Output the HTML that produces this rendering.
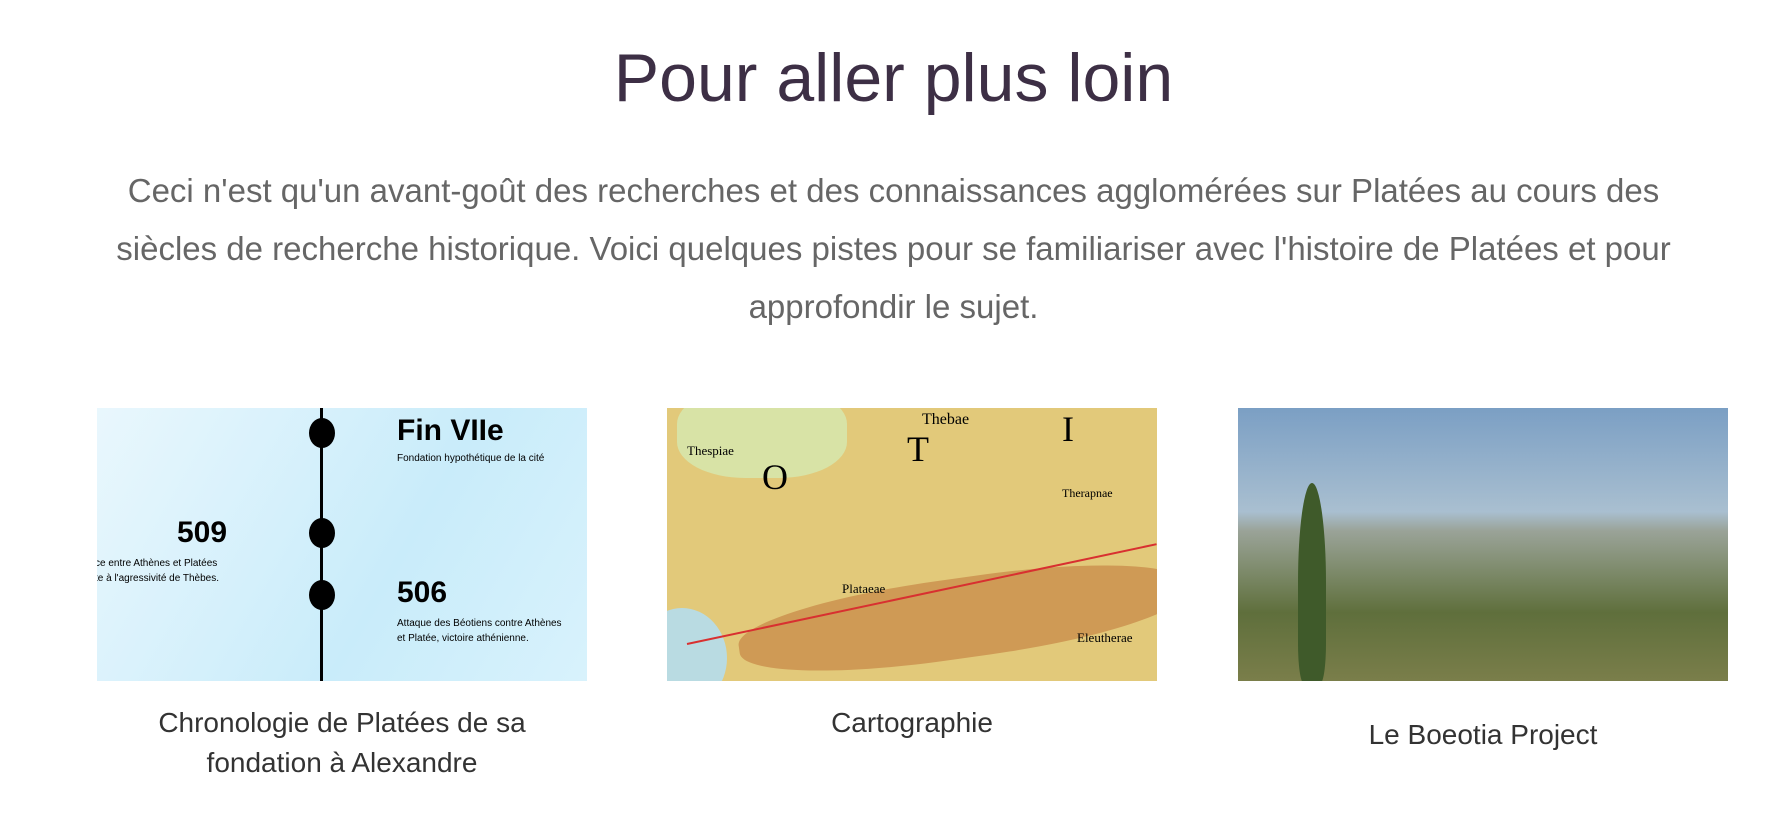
<!DOCTYPE html>
<html><head><meta charset="utf-8"><style>
body{margin:0;width:1787px;height:816px;background:#fff;overflow:hidden;font-family:"Liberation Sans",sans-serif;}
h1{position:absolute;top:39px;left:0;width:1787px;text-align:center;margin:0;font-weight:300;font-size:68px;color:#3d2f45;}
p.intro{position:absolute;top:162px;left:0;width:1787px;text-align:center;margin:0;font-weight:300;font-size:33px;line-height:58px;color:#666;white-space:nowrap;}
.card{position:absolute;top:408px;width:490px;height:273px;overflow:hidden;}
.cap{position:absolute;width:490px;text-align:center;font-size:28px;line-height:40px;color:#333;}
</style></head><body>
<h1>Pour aller plus loin</h1>
<p class="intro">Ceci n'est qu'un avant-goût des recherches et des connaissances agglomérées sur Platées au cours des<br>siècles de recherche historique. Voici quelques pistes pour se familiariser avec l'histoire de Platées et pour<br>approfondir le sujet.</p>

<div class="card" style="left:97px;background:linear-gradient(120deg,#e9f7fd,#c9ecfa 60%,#d8f2fc);">
<div style="position:absolute;left:223px;top:0;width:3px;height:273px;background:#000"></div>
<div style="position:absolute;left:212px;top:10px;width:26px;height:30px;border-radius:50%;background:#000"></div>
<div style="position:absolute;left:212px;top:110px;width:26px;height:30px;border-radius:50%;background:#000"></div>
<div style="position:absolute;left:212px;top:172px;width:26px;height:30px;border-radius:50%;background:#000"></div>
<div style="position:absolute;left:300px;top:6px;font-size:30px;font-weight:bold;color:#000">Fin VIIe</div>
<div style="position:absolute;left:300px;top:45px;font-size:10px;color:#000;white-space:nowrap">Fondation hypothétique de la cité</div>
<div style="position:absolute;left:80px;top:108px;font-size:30px;font-weight:bold;color:#000">509</div>
<div style="position:absolute;left:-2px;top:148px;font-size:10px;line-height:15px;color:#000;white-space:nowrap">ce entre Athènes et Platées<br>te à l'agressivité de Thèbes.</div>
<div style="position:absolute;left:300px;top:168px;font-size:30px;font-weight:bold;color:#000">506</div>
<div style="position:absolute;left:300px;top:208px;font-size:10px;line-height:15px;color:#000;white-space:nowrap">Attaque des Béotiens contre Athènes<br>et Platée, victoire athénienne.</div>
</div>

<div class="card" style="left:667px;background:#e2c97a;">
<div style="position:absolute;left:10px;top:-20px;width:170px;height:90px;border-radius:40%;background:#d8e3a6"></div>
<div style="position:absolute;left:70px;top:170px;width:450px;height:80px;border-radius:45%;background:#cf9a55;transform:rotate(-8deg)"></div>
<div style="position:absolute;left:-30px;top:200px;width:90px;height:100px;border-radius:50%;background:#b9dbe2"></div>
<div style="position:absolute;left:20px;top:235px;width:480px;height:2px;background:#d83030;transform:rotate(-12deg);transform-origin:left"></div>
<div style="position:absolute;left:255px;top:3px;font-family:'Liberation Serif',serif;font-size:16px">Thebae</div>
<div style="position:absolute;left:20px;top:35px;font-family:'Liberation Serif',serif;font-size:13px">Thespiae</div>
<div style="position:absolute;left:95px;top:48px;font-family:'Liberation Serif',serif;font-size:36px">O</div>
<div style="position:absolute;left:240px;top:20px;font-family:'Liberation Serif',serif;font-size:36px">T</div>
<div style="position:absolute;left:395px;top:0px;font-family:'Liberation Serif',serif;font-size:36px">I</div>
<div style="position:absolute;left:395px;top:78px;font-family:'Liberation Serif',serif;font-size:12px">Therapnae</div>
<div style="position:absolute;left:175px;top:173px;font-family:'Liberation Serif',serif;font-size:13px">Plataeae</div>
<div style="position:absolute;left:410px;top:222px;font-family:'Liberation Serif',serif;font-size:13px">Eleutherae</div>
</div>

<div class="card" style="left:1238px;background:linear-gradient(#7b9fc4 0%,#a9bfd0 38%,#9aa398 45%,#7d8a6a 60%,#5f6f3c 75%,#7a7e4a 100%);">
<div style="position:absolute;left:60px;top:75px;width:28px;height:200px;border-radius:50% 50% 20% 20%;background:#3f5a2a"></div>
</div>

<div class="cap" style="left:97px;top:703px">Chronologie de Platées de sa<br>fondation à Alexandre</div>
<div class="cap" style="left:667px;top:703px">Cartographie</div>
<div class="cap" style="left:1238px;top:715px">Le Boeotia Project</div>
</body></html>
